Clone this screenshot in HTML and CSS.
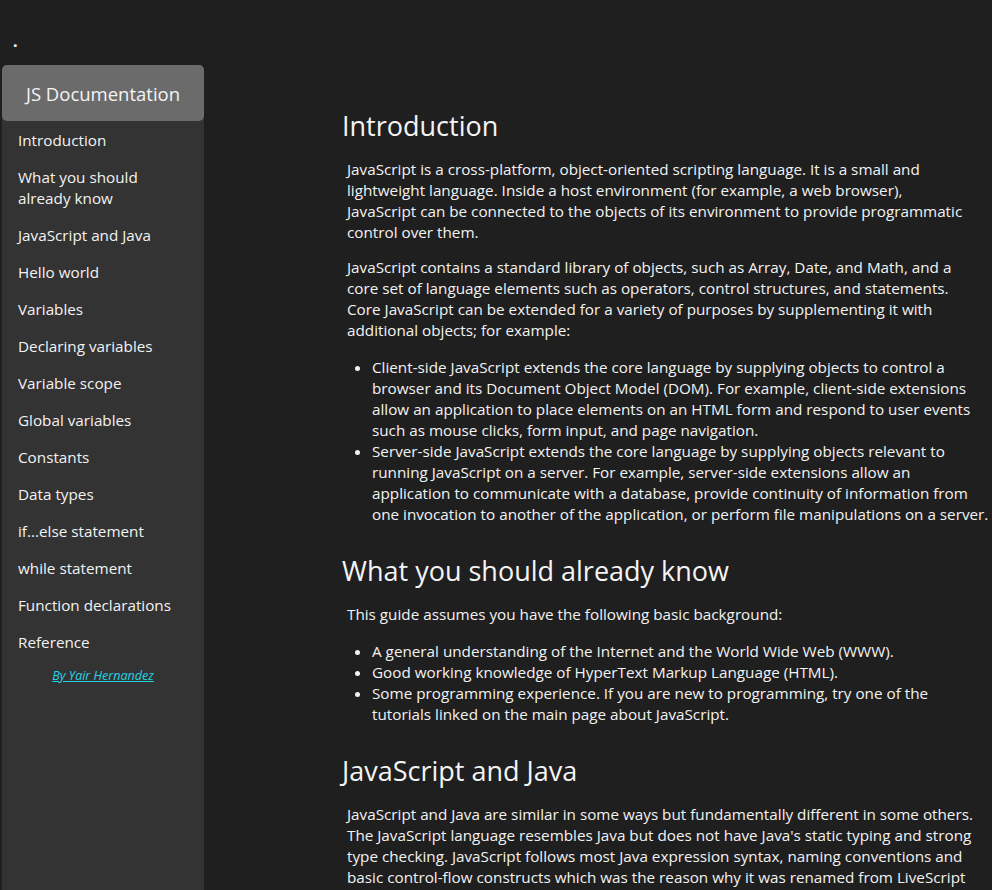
FILE: index.html
```html
<!DOCTYPE html>
<html lang="en">
<head>
<meta charset="utf-8">
<title>JS Documentation</title>
<link rel="stylesheet" href="styles.css">
</head>
<body>
<div class="topbar"><span class="dot">.</span></div>
<div class="layout">
  <nav class="navbar" id="navbar">
    <header class="nav-title">JS Documentation</header>
    <ul class="nav-list">
      <li><a class="nav-link" href="#Introduction">Introduction</a></li>
      <li><a class="nav-link" href="#What_you_should_already_know">What you should already know</a></li>
      <li><a class="nav-link" href="#JavaScript_and_Java">JavaScript and Java</a></li>
      <li><a class="nav-link" href="#Hello_world">Hello world</a></li>
      <li><a class="nav-link" href="#Variables">Variables</a></li>
      <li><a class="nav-link" href="#Declaring_variables">Declaring variables</a></li>
      <li><a class="nav-link" href="#Variable_scope">Variable scope</a></li>
      <li><a class="nav-link" href="#Global_variables">Global variables</a></li>
      <li><a class="nav-link" href="#Constants">Constants</a></li>
      <li><a class="nav-link" href="#Data_types">Data types</a></li>
      <li><a class="nav-link" href="#if...else_statement">if...else statement</a></li>
      <li><a class="nav-link" href="#while_statement">while statement</a></li>
      <li><a class="nav-link" href="#Function_declarations">Function declarations</a></li>
      <li><a class="nav-link" href="#Reference">Reference</a></li>
    </ul>
    <p class="credit"><a href="#">By Yair Hernandez</a></p>
  </nav>
  <main class="main-doc" id="main-doc">
    <section class="main-section" id="Introduction">
      <h1 class="sec-title">Introduction</h1>
      <p>JavaScript is a cross-platform, object-oriented scripting language. It is a small and lightweight language. Inside a host environment (for example, a web browser), JavaScript can be connected to the objects of its environment to provide programmatic control over them.</p>
      <p>JavaScript contains a standard library of objects, such as Array, Date, and Math, and a core set of language elements such as operators, control structures, and statements. Core JavaScript can be extended for a variety of purposes by supplementing it with additional objects; for example:</p>
      <ul>
        <li>Client-side JavaScript extends the core language by supplying objects to control a browser and its Document Object Model (DOM). For example, client-side extensions allow an application to place elements on an HTML form and respond to user events such as mouse clicks, form input, and page navigation.</li>
        <li>Server-side JavaScript extends the core language by supplying objects relevant to running JavaScript on a server. For example, server-side extensions allow an application to communicate with a database, provide continuity of information from one invocation to another of the application, or perform file manipulations on a server.</li>
      </ul>
    </section>
    <section class="main-section" id="What_you_should_already_know">
      <h2 class="sec-title">What you should already know</h2>
      <p>This guide assumes you have the following basic background:</p>
      <ul>
        <li>A general understanding of the Internet and the World Wide Web (WWW).</li>
        <li>Good working knowledge of HyperText Markup Language (HTML).</li>
        <li>Some programming experience. If you are new to programming, try one of the tutorials linked on the main page about JavaScript.</li>
      </ul>
    </section>
    <section class="main-section" id="JavaScript_and_Java">
      <h2 class="sec-title">JavaScript and Java</h2>
      <p>JavaScript and Java are similar in some ways but fundamentally different in some others. The JavaScript language resembles Java but does not have Java's static typing and strong type checking. JavaScript follows most Java expression syntax, naming conventions and basic control-flow constructs which was the reason why it was renamed from LiveScript to JavaScript.</p>
    </section>
  </main>
</div>
</body>
</html>
```
FILE: styles.css
```css
html, body {
  margin: 0;
  padding: 0;
  background: #1f1f1f;
  color: #f2f2f2;
  font-family: "Open Sans", "Noto Sans", sans-serif;
  font-size: 15.25px;
  line-height: 21px;
}

.topbar {
  height: 65px;
  box-sizing: border-box;
  padding: 31px 0 0 13px;
  font-size: 16px;
  line-height: 21px;
}

.dot {
  color: #ffffff;
  font-weight: 700;
}

.layout {
  display: flex;
  align-items: stretch;
}

.navbar {
  width: 202px;
  flex: 0 0 202px;
  margin-left: 2px;
  background: #333333;
  border-radius: 5px 5px 0 0;
  min-height: 900px;
}

.nav-title {
  height: 56px;
  background: #6b6b6b;
  border-radius: 5px;
  display: flex;
  align-items: center;
  justify-content: center;
  font-size: 18.5px;
  color: #f4f4f4;
}

.nav-list {
  list-style: none;
  margin: 0;
  padding: 0;
}

.nav-link {
  display: block;
  padding: 9px 16px 7px;
  color: #f2f2f2;
  text-decoration: none;
}

.credit {
  margin: 5px 0 0;
  text-align: center;
  font-size: 12.5px;
  font-style: italic;
}

.credit a {
  color: #27d3e3;
}

.main-doc {
  flex: 1 1 auto;
  padding: 43px 3px 0 138px;
  min-width: 0;
}

.sec-title {
  margin: 28px 0 15px;
  font-size: 27px;
  line-height: 36px;
  font-weight: 400;
  color: #f4f4f4;
}

.main-section:first-child .sec-title {
  margin-top: 0;
}

.main-section p {
  margin: 14px 15px 14px 5px;
}

.main-section ul {
  margin: 16px 0 16px 5px;
  padding-left: 25px;
}
```
